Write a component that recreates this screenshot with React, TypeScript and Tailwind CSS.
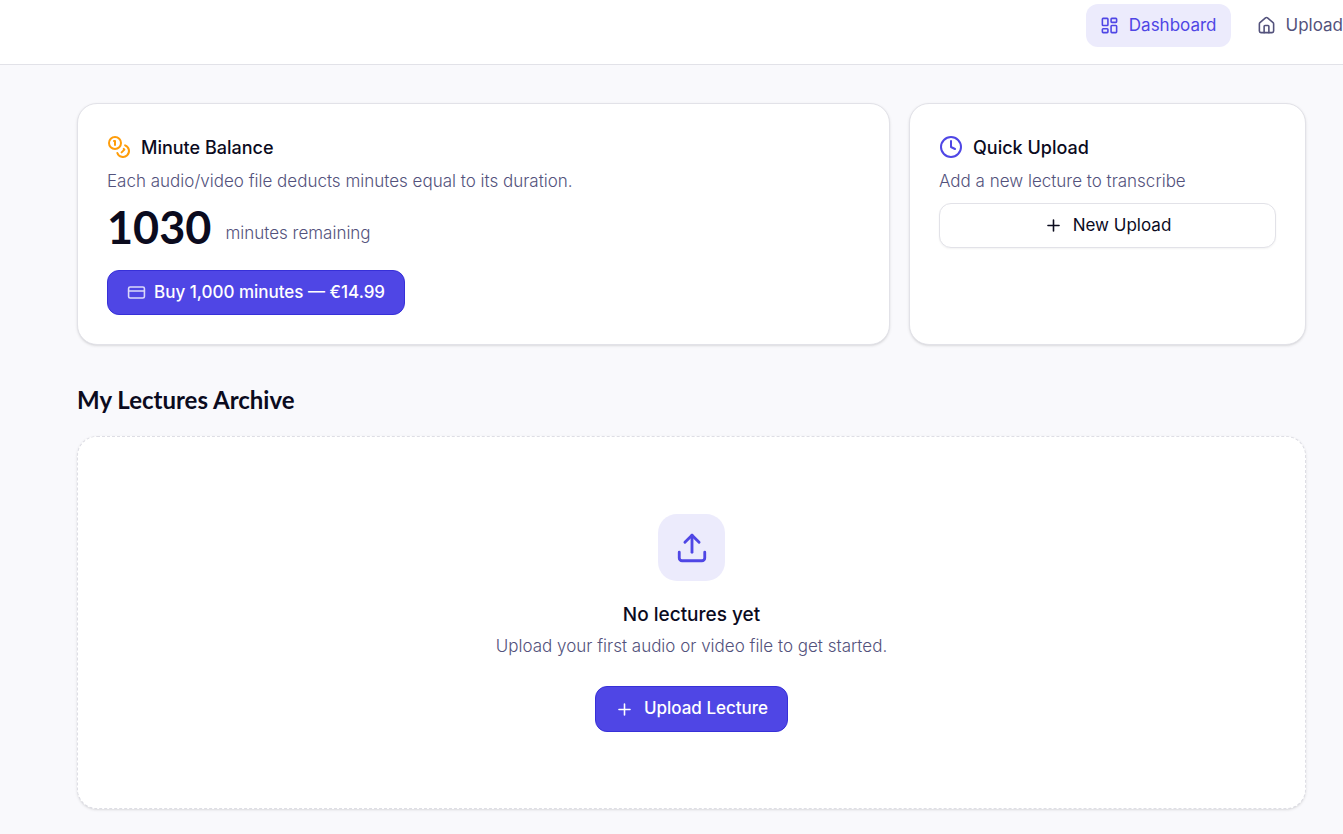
import type { ReactNode } from "react";
import { Clock, Coins, CreditCard, House, LayoutDashboard, Plus, Upload } from "lucide-react";

function NavItem({ icon, label, active = false }: { icon: ReactNode; label: string; active?: boolean }) {
  return (
    <a
      href="#"
      aria-current={active ? "page" : undefined}
      className={
        active
          ? "flex h-[43px] items-center gap-2.5 rounded-xl bg-[#ecebfc] px-3.5 text-[#4f46e5]"
          : "flex h-[43px] items-center gap-2.5 rounded-xl pl-3.5 text-[#53527c]"
      }
    >
      {icon}
      {label}
    </a>
  );
}

function Card({ icon, title, text, className, children }: { icon: ReactNode; title: string; text: string; className: string; children: ReactNode }) {
  return (
    <section className={className}>
      <h2 className="flex h-8 items-center gap-2.5 text-[18px] font-medium">
        {icon}
        {title}
      </h2>
      <p className="mt-1 leading-7 font-light text-[#53527c]">{text}</p>
      {children}
    </section>
  );
}

export default function App() {
  return (
    <div className="min-h-screen overflow-hidden bg-[#f9f9fc] pb-6 font-['Inter',sans-serif] text-[17px] text-[#0b0b1e]">
      <header className="border-b border-[#e2e2e8] bg-white pt-1 pb-[17px]">
        <nav className="flex justify-end gap-3">
          <NavItem active icon={<LayoutDashboard size={19} />} label="Dashboard" />
          <NavItem icon={<House size={19} />} label="Upload" />
        </nav>
      </header>

      <main className="pt-[38px] pr-[37px] pl-[77px]">
        <div className="grid grid-cols-3 gap-[19px]">
          <Card
            className="col-span-2 rounded-[20px] border border-[#e2e2e8] bg-white px-[29px] pt-[27px] pb-[29px] shadow"
            icon={<Coins size={24} className="text-[#ff9d0a]" />}
            title="Minute Balance"
            text="Each audio/video file deducts minutes equal to its duration."
          >
            <div className="mt-1.5 flex items-end gap-3.5">
              <span className="font-['Lato',sans-serif] text-[45px] leading-[52px] font-bold">1030</span>
              <span className="pb-1.5 leading-7 font-light text-[#53527c]">minutes remaining</span>
            </div>
            <button
              type="button"
              className="mt-[17px] flex h-[45px] items-center gap-2 rounded-xl border border-[#3730d8] bg-[#4f46e5] px-[19px] font-medium text-white"
            >
              <CreditCard size={19} className="opacity-80" />
              Buy 1,000 minutes — €14.99
            </button>
          </Card>
          <Card
            className="rounded-[20px] border border-[#e2e2e8] bg-white px-[29px] pt-[27px] pb-[29px] shadow"
            icon={<Clock size={24} className="text-[#4f46e5]" />}
            title="Quick Upload"
            text="Add a new lecture to transcribe"
          >
            <button
              type="button"
              className="mt-2 flex h-[45px] w-full items-center justify-center gap-2.5 rounded-xl border border-[#e2e2e8] bg-white shadow-xs"
            >
              <Plus size={19} />
              New Upload
            </button>
          </Card>
        </div>

        <h2 className="mt-[39px] font-['Lato',sans-serif] text-[24px] leading-8 font-bold">My Lectures Archive</h2>

        <section className="mt-5 flex flex-col items-center rounded-[20px] border border-dashed border-[#dedee5] bg-white pt-[77px] pb-[76px] shadow">
          <div className="flex size-[67px] items-center justify-center rounded-[19px] bg-[#ecebfc] text-[#4f46e5]">
            <Upload size={34} />
          </div>
          <h3 className="mt-5 text-[19px] leading-7 font-medium">No lectures yet</h3>
          <p className="mt-[3px] leading-7 font-light text-[#53527c]">Upload your first audio or video file to get started.</p>
          <button
            type="button"
            className="mt-[26px] flex h-[46px] items-center gap-2.5 rounded-xl border border-[#3730d8] bg-[#4f46e5] px-[19px] font-medium text-white"
          >
            <Plus size={19} />
            Upload Lecture
          </button>
        </section>
      </main>
    </div>
  );
}
